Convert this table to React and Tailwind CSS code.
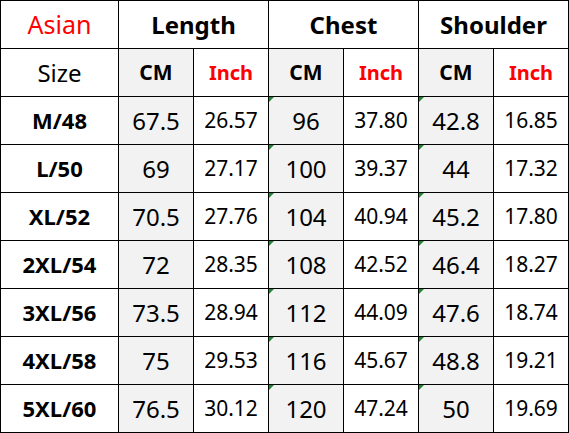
import React from 'react';

const rows = [
  ['M/48', '67.5', '26.57', '96', '37.80', '42.8', '16.85'],
  ['L/50', '69', '27.17', '100', '39.37', '44', '17.32'],
  ['XL/52', '70.5', '27.76', '104', '40.94', '45.2', '17.80'],
  ['2XL/54', '72', '28.35', '108', '42.52', '46.4', '18.27'],
  ['3XL/56', '73.5', '28.94', '112', '44.09', '47.6', '18.74'],
  ['4XL/58', '75', '29.53', '116', '45.67', '48.8', '19.21'],
  ['5XL/60', '76.5', '30.12', '120', '47.24', '50', '19.69'],
];

const cell = 'h-12 flex items-center justify-center border-r border-b border-black';

const Flag = () => (
  <span className="absolute left-0 top-0 w-0 h-0 border-t-[5px] border-r-[5px] border-t-[#1b8a2a] border-r-transparent" />
);

const App = () => {
  return (
    <div className="w-[569px] h-[433px] bg-white text-black font-['Noto_Sans',sans-serif]">
      <div className="grid grid-cols-[118px_repeat(6,75px)] border-l border-t border-black">
        <div className={`${cell} text-[25px] text-[#f00]`}>Asian</div>
        <div className={`${cell} col-span-2 text-[24px] font-bold`}>Length</div>
        <div className={`${cell} col-span-2 text-[24px] font-bold`}>Chest</div>
        <div className={`${cell} col-span-2 text-[24px] font-bold`}>Shoulder</div>

        <div className={`${cell} text-[24px]`}>Size</div>
        {[0, 1, 2].map((i) => (
          <React.Fragment key={i}>
            <div className={`${cell} bg-[#f2f2f2] text-[21px] font-bold`}>CM</div>
            <div className={`${cell} text-[20px] font-bold text-[#f00]`}>Inch</div>
          </React.Fragment>
        ))}

        {rows.map((r) => (
          <React.Fragment key={r[0]}>
            <div className={`${cell} text-[22px] font-bold`}>{r[0]}</div>
            <div className={`${cell} bg-[#f2f2f2] text-[24px]`}>{r[1]}</div>
            <div className={`${cell} text-[21px]`}>{r[2]}</div>
            <div className={`${cell} relative bg-[#f2f2f2] text-[24px]`}>
              <Flag />
              {r[3]}
            </div>
            <div className={`${cell} text-[21px]`}>{r[4]}</div>
            <div className={`${cell} relative bg-[#f2f2f2] text-[24px]`}>
              <Flag />
              {r[5]}
            </div>
            <div className={`${cell} text-[21px]`}>{r[6]}</div>
          </React.Fragment>
        ))}
      </div>
    </div>
  );
};

export default App;
